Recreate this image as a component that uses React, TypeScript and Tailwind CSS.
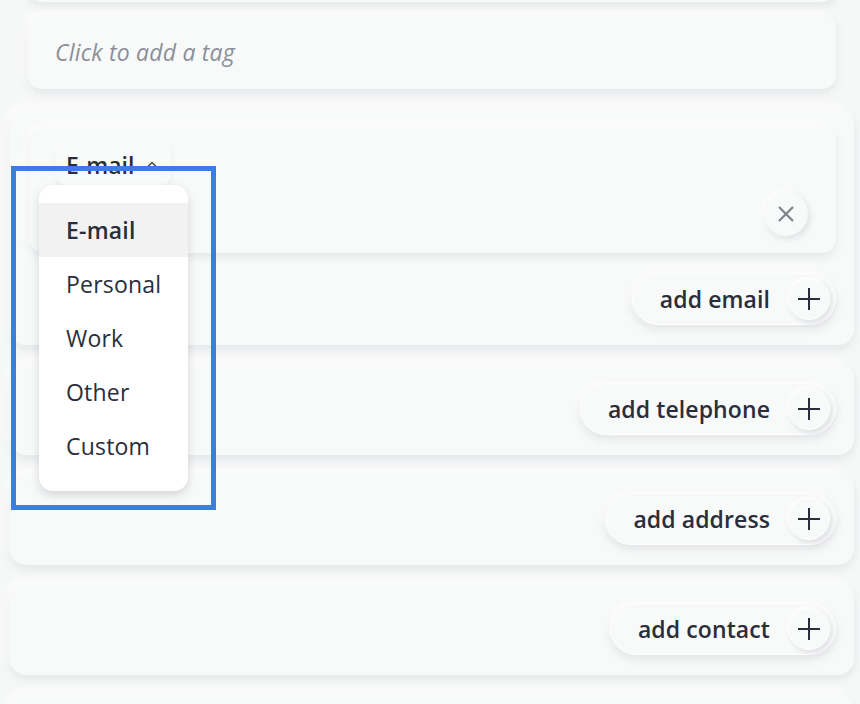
import React from "react";

const cardShadow =
  "shadow-[0_4px_8px_rgba(150,156,166,0.18),-3px_-3px_6px_rgba(255,255,255,0.95)]";

function Plus() {
  return (
    <svg width="24" height="24" viewBox="0 0 24 24" fill="none" stroke="#2a2e3b" strokeWidth="2" strokeLinecap="butt">
      <path d="M12 1v22M1 12h22" />
    </svg>
  );
}

function Pill({ label }: { label: string }) {
  return (
    <div
      className={`flex items-center h-[52px] rounded-full pl-[27px] pr-[5px] bg-[#f8f9f9] border border-white shadow-[0_4px_8px_rgba(150,156,166,0.22),-2px_-2px_5px_rgba(255,255,255,1)]`}
    >
      <span className="text-[23px] font-semibold text-[#2a2e3b] leading-none tracking-[0.1px]">{label}</span>
      <div className="ml-[18px] w-[42px] h-[42px] rounded-full bg-[#f8f9f9] border border-white flex items-center justify-center shadow-[2px_3px_5px_rgba(150,156,166,0.25),-1px_-1px_3px_rgba(255,255,255,1)]">
        <Plus />
      </div>
    </div>
  );
}

function SimpleCard({ label }: { label: string }) {
  return (
    <div className={`mt-[18px] ml-[10px] w-[844px] h-[92px] rounded-[16px] bg-[#f8f9f9] ${cardShadow} flex items-center justify-end pr-[18px]`}>
      <Pill label={label} />
    </div>
  );
}

export default function App() {
  const items = ["E-mail", "Personal", "Work", "Other", "Custom"];
  return (
    <div className="relative w-[860px] h-[704px] overflow-hidden bg-[#f6f7f7] font-['Open_Sans',sans-serif]">
      <div className="flex flex-col">
        <div className={`-mt-[58px] ml-[28px] w-[808px] h-[60px] rounded-[14px] bg-[#f8f9f9] ${cardShadow}`} />
        <div className={`mt-[13px] ml-[28px] w-[808px] h-[74px] rounded-[14px] bg-[#f8f9f9] ${cardShadow} flex items-center pl-[27px]`}>
          <span className="italic text-[23px] text-[#8b8f98] leading-none tracking-[0.2px]">Click to add a tag</span>
        </div>

        <div className={`mt-[19px] ml-[10px] w-[844px] rounded-[16px] bg-[#f8f9f9] ${cardShadow} pt-[19px] pl-[20px] pr-[18px] pb-[20px] flex flex-col`}>
          <div className={`h-[126px] rounded-[14px] bg-[#f8f9f9] ${cardShadow} flex flex-col pt-[18px] pl-[27px] pr-[28px]`}>
            <div className="flex items-center h-[40px] w-[114px] rounded-[8px] bg-[#f9fafa] pl-[9px] shadow-[0_2px_4px_rgba(150,156,166,0.15),-1px_-1px_3px_rgba(255,255,255,1)]">
              <span className="text-[23px] font-semibold text-[#2a2e3b] leading-none">E-mail</span>
              <svg className="ml-[11px]" width="14" height="10" viewBox="0 0 14 10" fill="none" stroke="#3a3e4a" strokeWidth="1.4">
                <path d="M2 7.5 7 2.5 12 7.5" />
              </svg>
            </div>
            <div className="mt-[7px] self-end w-[44px] h-[44px] rounded-full bg-[#f8f9f9] flex items-center justify-center shadow-[2px_3px_6px_rgba(150,156,166,0.25),-2px_-2px_4px_rgba(255,255,255,1)]">
              <svg width="18" height="18" viewBox="0 0 18 18" fill="none" stroke="#7f828a" strokeWidth="2.2">
                <path d="M2 2 16 16M16 2 2 16" />
              </svg>
            </div>
          </div>
          <div className="mt-[20px] flex justify-end">
            <Pill label="add email" />
          </div>
        </div>

        <SimpleCard label="add telephone" />
        <SimpleCard label="add address" />
        <SimpleCard label="add contact" />
        <div className={`mt-[18px] ml-[10px] w-[844px] h-[92px] rounded-[16px] bg-[#f8f9f9] ${cardShadow}`} />
      </div>

      <div className="absolute left-[39px] top-[185px] w-[149px] h-[306px] rounded-[14px] bg-white pt-[18px] shadow-[0_4px_10px_rgba(90,96,110,0.22)]">
        {items.map((it, i) => (
          <div
            key={it}
            className={`h-[54px] flex items-center pl-[27px] text-[23px] leading-none text-[#2a2e3b] tracking-[0.2px] ${
              i === 0 ? "bg-[#f2f2f2] font-semibold" : "font-normal"
            }`}
          >
            {it}
          </div>
        ))}
      </div>

      <div className="absolute left-[11px] top-[166px] w-[205px] h-[344px] border-[5px] border-[#3b7de7]" />
    </div>
  );
}
